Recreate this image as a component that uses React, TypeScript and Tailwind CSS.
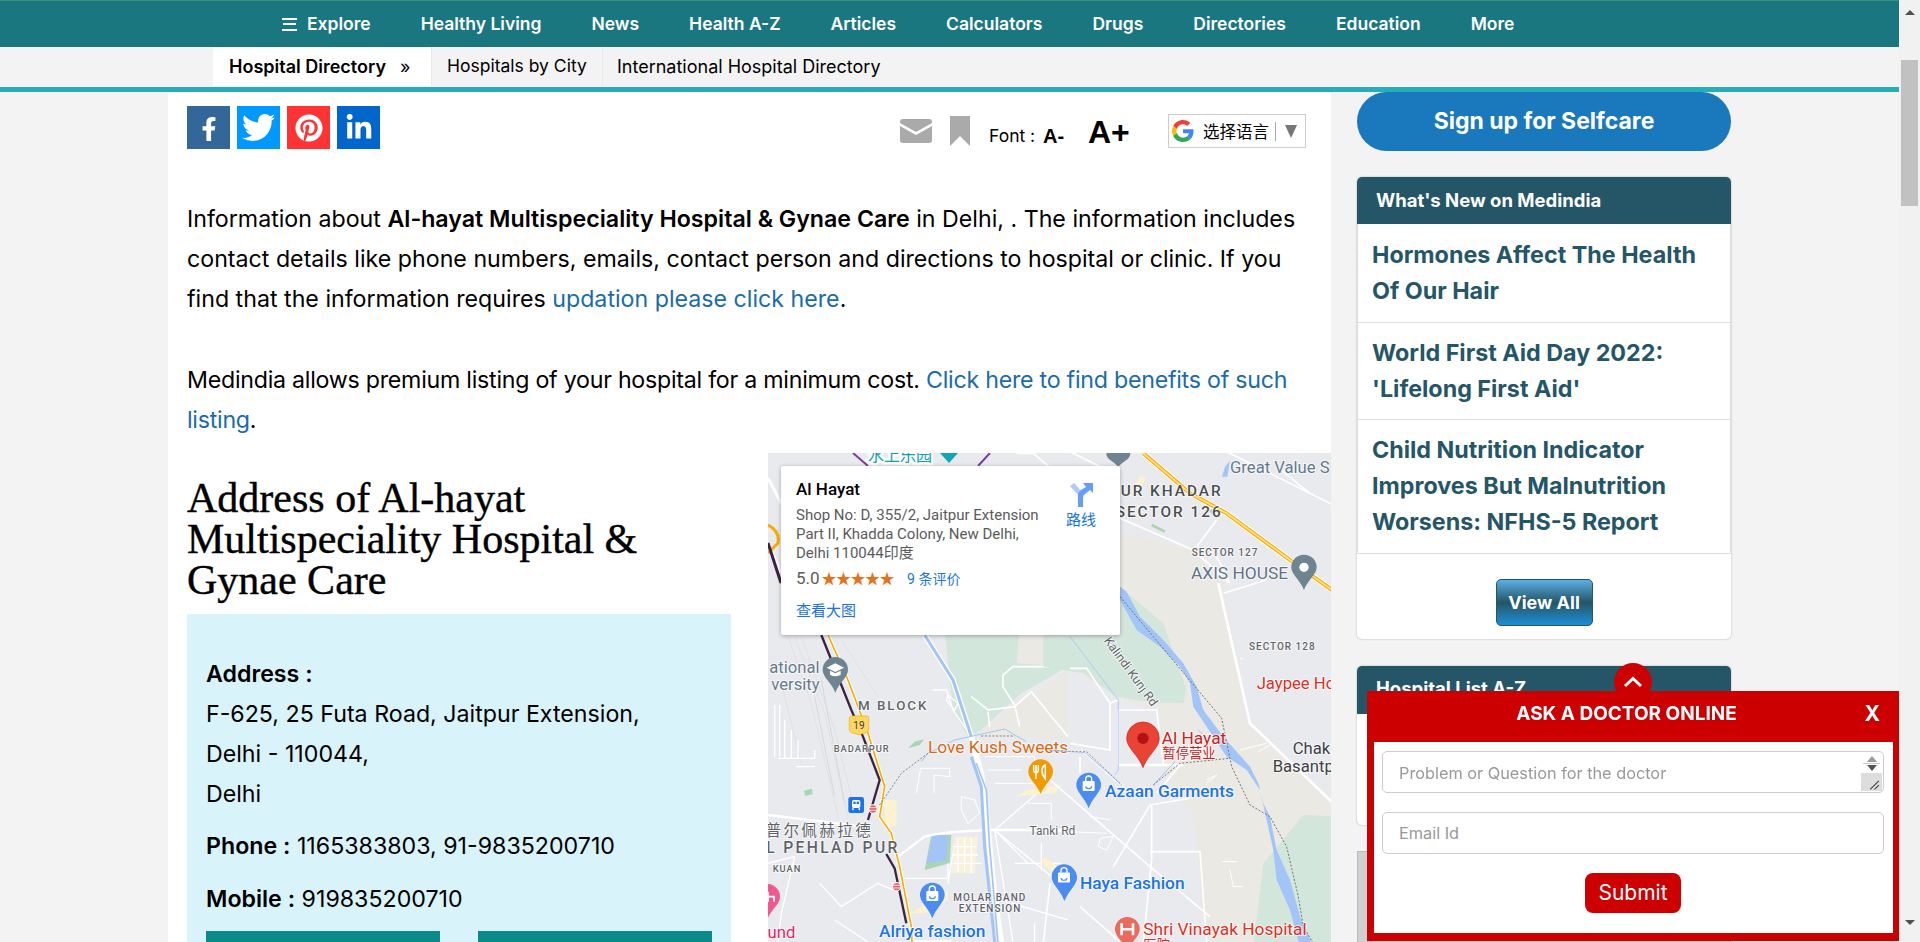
import { FaFacebookF, FaTwitter, FaPinterest, FaLinkedinIn } from "react-icons/fa";

const navLinks = ["Healthy Living", "News", "Health A-Z", "Articles", "Calculators", "Drugs", "Directories", "Education", "More"];

const sideNews = [
  { id: 1, lines: "Hormones Affect The Health Of Our Hair", cls: "pt-[13px] pb-[13px]" },
  { id: 2, lines: "World First Aid Day 2022: 'Lifelong First Aid'", cls: "pt-[12px] pb-[12px]" },
  { id: 3, lines: "Child Nutrition Indicator Improves But Malnutrition Worsens: NFHS-5 Report", cls: "pt-[12px] pb-[13px]" },
];

function pinPath(cx: number, cy: number, r: number, tip: number) {
  const k = tip - cy;
  return `M${cx} ${tip}C${cx - r * 0.3} ${cy + k * 0.55} ${cx - r} ${cy + r * 0.6} ${cx - r} ${cy}A${r} ${r} 0 1 1 ${cx + r} ${cy}C${cx + r} ${cy + r * 0.6} ${cx + r * 0.3} ${cy + k * 0.55} ${cx} ${tip}Z`;
}

function Pin({ cx, cy, r, tip, fill }: { cx: number; cy: number; r: number; tip: number; fill: string }) {
  return <path d={pinPath(cx, cy, r, tip)} fill={fill} />;
}

function BagPin({ cx, cy }: { cx: number; cy: number }) {
  return (
    <g>
      <Pin cx={cx} cy={cy} r={37} tip={cy + 70} fill="#4a8cf0" />
      <rect x={cx - 18} y={cy - 12} width={36} height={30} rx={3} fill="#fff" />
      <path d={`M${cx - 9} ${cy - 12}v-6a9 9 0 0 1 18 0v6`} fill="none" stroke="#fff" strokeWidth={4} />
      <path d={`M${cx - 9} ${cy + 4}a9 7 0 0 0 18 0`} fill="none" stroke="#4a8cf0" strokeWidth={3.5} />
    </g>
  );
}

function Label({ x, y, size, fill, children, weight = 400, spacing = 0, anchor = "start", rotate }: {
  x: number; y: number; size: number; fill: string; children: string; weight?: number; spacing?: number; anchor?: "start" | "end"; rotate?: number;
}) {
  return (
    <text
      x={x}
      y={y}
      fontSize={size}
      fontWeight={weight}
      fill={fill}
      letterSpacing={spacing}
      textAnchor={anchor}
      dominantBaseline="central"
      stroke="#ffffff"
      strokeWidth={5}
      strokeOpacity={0.85}
      paintOrder="stroke"
      transform={rotate ? `rotate(${rotate} ${x} ${y})` : undefined}
      className="font-['Roboto','Noto_Sans_CJK_SC',sans-serif]"
    >
      {children}
    </text>
  );
}

function MapPicture() {
  return (
    <svg width="563" height="520" className="block">
      <rect width="563" height="520" fill="#e8eaed" />

      {/* left half, traced at 3x */}
      <g transform="translate(0,177) scale(0.3333)">
        <path d="M530 0L900 0V110L760 190L640 300L600 320L555 240Z" fill="#d3e6dc" />
        <path d="M740 225L800 185L900 120V330L730 320L620 320Z" fill="#ebe9e3" />
        <path d="M470 720L490 615H550L545 700Z" fill="#a8d5b5" />
        <path d="M475 700L495 615H540L535 690Z" fill="#a3c4f7" />
        <path d="M420 355L440 335L468 328L455 345Z" fill="#a8d5b5" />
        <path d="M108 482L132 476L134 492L112 498Z" fill="#a8d5b5" />
        <g fill="none" stroke="#dfe1e5" strokeWidth={3}>
          <path d="M60 20L130 220L210 560M80 20L170 250L240 560M100 20L200 300L260 540M220 30L330 200M40 160L100 400" />
          <path d="M140 200L200 500M160 150L230 520" stroke="#d5d7db" />
        </g>
        <g fill="none" stroke="#ffffff" strokeWidth={4}>
          <path d="M20 225V380M35 225V380M50 270V385M70 300V385M90 330V385M30 385H140V360M85 410H140" />
          <path d="M0 555L290 590M390 680L470 620Q520 605 670 600H900" strokeWidth={7} />
          <path d="M0 700L80 680L40 850L30 936M155 760L220 830L330 760L420 800M200 870L300 936" />
          <path d="M445 490L458 415H545V440L498 435V490" strokeWidth={3} />
          <path d="M540 195L570 220L560 240L535 210ZM495 180H535L555 240L610 320" />
          <path d="M610 200L660 240L740 230L790 185L900 320M705 135L735 110H900M705 135V170L740 225L755 290M660 245L665 290" strokeWidth={5} />
          <path d="M680 600L820 480M680 600L900 780M680 600L780 700M680 600L735 936M410 745H540V700M540 760L560 640" />
          <path d="M580 500L620 510L635 550L600 580L580 540ZM650 380H800V440H840M660 420H760M680 460H800M780 520H850V570" strokeWidth={3} />
          <path d="M740 700H880M820 640V720M800 880V936M730 820L900 870" />
        </g>
        <path d="M780 480L880 465L860 490L740 500ZM830 680L880 720V750L820 700ZM450 835L540 780V810L470 850H430ZM350 510H385V590H350Z" fill="#fdf2cf" />
        <path d="M560 620H630L620 730H550Z" fill="#f8f1de" />
        <g fill="none" stroke="#ffffff" strokeWidth={4}>
          <path d="M570 625V725M590 625V725M610 625V730M555 650H625M555 675H630M555 700H640" />
        </g>
        <path d="M470 15L555 150L610 320L640 430L660 600L680 800L700 936" fill="none" stroke="#ffffff" strokeWidth={17} />
        <path d="M470 15L555 150L610 320" fill="none" stroke="#a3c4f7" strokeWidth={9} />
        <path d="M610 380L640 470L650 650L680 936" fill="none" stroke="#a3c4f7" strokeWidth={9} />
        <path d="M625 400L655 480L665 650L690 936" fill="none" stroke="#a3c4f7" strokeWidth={5} />
        <path d="M480 370L560 330L710 297L775 335M460 395L480 370" fill="none" stroke="#a3c4f7" strokeWidth={3} />
        <path d="M180 15L240 150L300 310L350 470L335 560L370 610L395 710L430 890L432 936H550" fill="none" stroke="#fff" strokeWidth={11} />
        <path d="M180 15L240 150L300 310L350 470L335 560L370 610L395 710L430 890L432 936" fill="none" stroke="#f9ab00" strokeWidth={5} />
        <path d="M160 15L250 240L285 320L335 450L300 570M355 672L380 715L415 880" fill="none" stroke="#3c2342" strokeWidth={7} />
        <path d="M335 525L400 430L480 370M640 318L740 318" fill="none" stroke="#80868b" strokeWidth={3} strokeDasharray="6 5" />
        <circle cx={315} cy={537} r={14} fill="#fff" />
        <circle cx={315} cy={537} r={11} fill="#ea5b6a" />
        <path d="M303 533H327M303 541H327" stroke="#fff" strokeWidth={2.5} />
        <circle cx={386} cy={770} r={14} fill="#fff" />
        <circle cx={386} cy={770} r={11} fill="#ea5b6a" />
        <path d="M375 766H397M375 774H397" stroke="#fff" strokeWidth={2.5} />
        <rect x={241} y={501} width={47} height={48} rx={7} fill="#1a73e8" />
        <rect x={252} y={510} width={25} height={24} rx={5} fill="#fff" />
        <rect x={256} y={515} width={7} height={7} fill="#1a73e8" />
        <rect x={266} y={515} width={7} height={7} fill="#1a73e8" />
        <path d="M255 534V541M274 534V541" stroke="#fff" strokeWidth={4} />
        <path d="M244 263Q246 258 252 258H296Q302 258 302 263V298Q302 306 295 308L273 314L251 308Q244 306 244 298Z" fill="#fdd663" stroke="#f9ab00" strokeWidth={2} />
        <text x={273} y={286} fontSize={30} textAnchor="middle" dominantBaseline="central" fill="#3c4043" className="font-['Roboto',sans-serif]">19</text>
        <Pin cx={202} cy={119} r={38} tip={188} fill="#6e8491" />
        <path d="M202 100L228 113L202 126L176 113Z" fill="#fff" />
        <path d="M186 122V134Q202 144 218 134V122L202 130Z" fill="#fff" />
        <Pin cx={818} cy={425} r={37} tip={492} fill="#f29900" />
        <path d="M804 405V428M797 405V420Q797 428 804 428Q811 428 811 420V405M804 428V447M832 405V447Q822 435 822 420Q822 410 832 405Z" fill="none" stroke="#fff" strokeWidth={4.5} />
        <BagPin cx={493} cy={795} />
        <BagPin cx={890} cy={743} />
        <Pin cx={-2} cy={800} r={38} tip={868} fill="#ee5a8f" />
        <path d="M0 785V815M0 800H18V815" fill="none" stroke="#fff" strokeWidth={5} />

        <Label x={155} y={112} size={50} fill="#64798a" anchor="end">ational</Label>
        <Label x={155} y={165} size={50} fill="#64798a" anchor="end">versity</Label>
        <Label x={270} y={228} size={40} fill="#5f6368" weight={500} spacing={6}>M BLOCK</Label>
        <Label x={197} y={357} size={28} fill="#5f6368" weight={500} spacing={3}>BADARPUR</Label>
        <Label x={480} y={350} size={52} fill="#d9670f">Love Kush Sweets</Label>
        <Label x={316} y={603} size={47} fill="#5f6368" spacing={7} anchor="end">普尔佩赫拉德</Label>
        <Label x={395} y={653} size={47} fill="#5f6368" weight={500} spacing={7} anchor="end">L PEHLAD PUR</Label>
        <Label x={14} y={715} size={28} fill="#5f6368" weight={500} spacing={3}>KUAN</Label>
        <Label x={556} y={804} size={30} fill="#5f6368" weight={500} spacing={3}>MOLAR BAND</Label>
        <Label x={572} y={837} size={30} fill="#5f6368" weight={500} spacing={3}>EXTENSION</Label>
        <Label x={333} y={903} size={52} fill="#1a73e8" weight={500}>Alriya fashion</Label>
        <Label x={82} y={908} size={50} fill="#e91e63" anchor="end">und</Label>
      </g>

      {/* right half, traced at 3x */}
      <g transform="translate(282,-3) scale(0.3333)">
        <path d="M-60 180L420 300L520 400L600 820L860 1070V1110L760 1095L640 1240L610 1490H470L430 1100L340 960L330 790L200 740L60 650L-100 640Z" fill="#ebe9e3" />
        <path d="M760 1095L860 1100V1490H610L640 1240Z" fill="#d3e6dc" />
        <path d="M210 410L340 520L410 720L400 760L320 760L200 740L100 670L-20 650L-20 555H210Z" fill="#d3e6dc" />
        <path d="M210 410L230 425L270 500L340 570L400 640L440 710L460 780L520 860L600 950L625 1000L640 1060L660 1100L680 1200L720 1290L750 1400L790 1490H750L720 1380L680 1290L670 1200L650 1110L630 1020L590 960L530 920L470 830L430 770L420 700L390 650L330 590L260 540L210 450Z" fill="#a3c4f7" />
        <path d="M525 50L540 32L532 80L516 80Z" fill="#a3c4f7" />
        <g fill="none" stroke="#ffffff" strokeWidth={5}>
          <path d="M50 0L170 60M100 60L210 210M210 205L430 300L540 400M520 0L860 170M680 50L780 130" />
          <path d="M505 400L600 820L860 1070" strokeWidth={8} />
          <path d="M520 430L650 390M540 400L500 320M440 290L500 210" />
          <path d="M205 945H400" strokeWidth={8} />
          <path d="M205 780V945M205 780H320L340 945M180 760L205 750M60 655L110 655L180 760L180 900L60 880" />
          <path d="M0 900L100 905L200 995L220 1005M90 920V970M300 1065L420 1045M300 1065L190 1250M305 1065V1230L280 1476" />
          <path d="M0 990L300 1250L480 1400M300 1205H450L470 1476M320 1030L390 945" />
          <path d="M0 1143L170 1150M150 1165L190 1160L170 1200L145 1190ZM120 1100L180 1110M515 1235H560M540 1260L550 1310H580M470 990L500 975L470 1000" strokeWidth={3} />
          <path d="M90 1370L210 1476M0 1300L-20 1476" />
          <path d="M570 900L650 880M625 905L660 885M570 625L580 628" strokeWidth={3} />
        </g>
        <path d="M60 560L205 750V960L195 975" fill="none" stroke="#a3c4f7" strokeWidth={2.5} />
        <path d="M0 900L105 908L215 1005M310 1005L375 935" fill="none" stroke="#a3c4f7" strokeWidth={3} />
        <path d="M445 840L480 875" fill="none" stroke="#a3c4f7" strokeWidth={3} />
        <path d="M-100 10L-50 10L20 70" fill="none" stroke="#fff" strokeWidth={5} />
        <path d="M280 10L420 130L530 190L720 330L860 430" fill="none" stroke="#fff" strokeWidth={18} />
        <path d="M280 10L420 130L530 190L720 330L860 430" fill="none" stroke="#f9ab00" strokeWidth={12} />
        <path d="M280 10L420 130L530 190L720 330L860 430" fill="none" stroke="#fde293" strokeWidth={5} />
        <path d="M270 80H290L260 130H240Z" fill="#fdf2cf" />
        <path d="M305 225L345 245M480 180L495 195" stroke="#a8d5b5" strokeWidth={8} />
        <path d="M210 440L410 680L515 805L545 950L600 1065L660 1100L710 1190L745 1340L760 1430L790 1480M310 1005L390 940L540 925" fill="none" stroke="#6f7478" strokeWidth={3} strokeDasharray="6 5" />
        <path d="M0 902L110 905L215 1005" fill="none" stroke="#80868b" strokeWidth={2.5} strokeDasharray="6 5" />

        <Pin cx={762} cy={352} r={38} tip={420} fill="#6e8491" />
        <circle cx={762} cy={352} r={14} fill="#fff" />
        <Pin cx={205} cy={10} r={36} tip={52} fill="#6e8491" />
        <Pin cx={279} cy={865} r={49} tip={953} fill="#ea4335" />
        <path d={pinPath(279, 865, 49, 953)} fill="none" stroke="#c5221f" strokeWidth={2} />
        <circle cx={279} cy={865} r={17} fill="#b31412" />
        <BagPin cx={116} cy={1005} />
        <BagPin cx={42} cy={1280} />
        <Pin cx={232} cy={1438} r={37} tip={1505} fill="#ea6a5e" />
        <path d="M215 1420V1456M249 1420V1456M215 1438H249" stroke="#fff" strokeWidth={8} fill="none" />

        <Label x={518} y={123} size={46} fill="#4a4d50" weight={500} spacing={6} anchor="end">JAITPUR KHADAR</Label>
        <Label x={518} y={187} size={46} fill="#4a4d50" weight={500} spacing={6} anchor="end">SECTOR 126</Label>
        <Label x={540} y={52} size={50} fill="#5d7a8c">Great Value Sharanam</Label>
        <Label x={425} y={308} size={30} fill="#5f6368" weight={500} spacing={3}>SECTOR 127</Label>
        <Label x={423} y={368} size={52} fill="#5d7285">AXIS HOUSE</Label>
        <Label x={597} y={591} size={30} fill="#5f6368" weight={500} spacing={3}>SECTOR 128</Label>
        <Label x={620} y={700} size={50} fill="#d93025">Jaypee Hospital</Label>
        <Label x={728} y={897} size={50} fill="#3c4043">Chak</Label>
        <Label x={668} y={950} size={50} fill="#3c4043">Basantpur</Label>
        <Label x={170} y={565} size={37} fill="#5f6368" rotate={54}>Kalindi Kunj Rd</Label>
        <Label x={335} y={865} size={52} fill="#c5221f">Al Hayat</Label>
        <Label x={337} y={910} size={40} fill="#c5221f">暂停营业</Label>
        <Label x={165} y={1024} size={52} fill="#1a73e8" weight={500}>Azaan Garments</Label>
        <Label x={76} y={1143} size={36} fill="#5f6368" anchor="end">Tanki Rd</Label>
        <Label x={90} y={1300} size={52} fill="#1a73e8" weight={500}>Haya Fashion</Label>
        <Label x={280} y={1438} size={52} fill="#d93025">Shri Vinayak Hospital</Label>
        <Label x={280} y={1486} size={40} fill="#d93025">医院</Label>
      </g>

      {/* strip above the info window */}
      <Label x={100} y={2} size={16} fill="#129eaf">水上乐园</Label>
      <path d="M172 0H190L181 10Z" fill="#12a5b5" />
      <path d="M85 0L100 13M210 13L222 0" fill="none" stroke="#7b3f98" strokeWidth={2} />
      <path d="M0 25L13 50M0 90L13 120" fill="none" stroke="#fff" strokeWidth={3} />
      <path d="M0 72Q12 78 10 90L0 100" fill="none" stroke="#f9ab00" strokeWidth={3} />
      <path d="M0 90L13 130" fill="none" stroke="#3c2342" strokeWidth={3} />
    </svg>
  );
}

function InfoWindow() {
  return (
    <div className="absolute left-[13px] top-[13px] w-[339px] h-[169px] bg-white rounded-[2px] shadow-[0_1px_4px_rgba(0,0,0,0.3)] pl-[15px] pt-[13px] font-['Roboto','Noto_Sans_CJK_SC',sans-serif] text-[#5b5b5b]">
      <div className="text-[17px] leading-[20px] font-medium text-black">Al Hayat</div>
      <div className="mt-[7px] w-[250px] text-[15px] leading-[19px]">
        Shop No: D, 355/2, Jaitpur Extension Part II, Khadda Colony, New Delhi, Delhi 110044印度
      </div>
      <div className="mt-[4px] flex items-center h-[24px]">
        <span className="text-[17px]">5.0</span>
        <span className="ml-[2px] text-[15px] tracking-[-0.5px] text-[#e7711b]">★★★★★</span>
        <span className="ml-[13px] text-[14px] text-[#1a73e8]">9 条评价</span>
      </div>
      <div className="mt-[10px] text-[15px] leading-[20px] text-[#1a73e8]">查看大图</div>
      <div className="absolute left-[283px] top-[16px] flex flex-col items-center w-[34px]">
        <svg width="24" height="25" viewBox="0 0 24 25">
          <path d="M1 4L5 1L14 11V25H9V13Z" fill="#aecbfa" />
          <path d="M9 25V14Q9 10 12 8L17 5L14 1H24V11L21 8L16 12Q14 13 14 16V25Z" fill="#669df6" />
        </svg>
        <span className="mt-[3px] text-[15px] leading-[20px] text-[#1a73e8]">路线</span>
      </div>
    </div>
  );
}

function GoogleG() {
  return (
    <svg width="22" height="22" viewBox="0 0 48 48">
      <path fill="#EA4335" d="M24 9.5c3.5 0 6.7 1.2 9.2 3.6l6.9-6.9C35.9 2.4 30.5 0 24 0 14.6 0 6.5 5.4 2.6 13.2l8 6.2C12.4 13.7 17.7 9.5 24 9.5z" />
      <path fill="#4285F4" d="M46.98 24.55c0-1.57-.15-3.09-.38-4.55H24v9.02h12.94c-.58 2.96-2.26 5.48-4.78 7.18l7.73 6c4.51-4.18 7.09-10.36 7.09-17.65z" />
      <path fill="#FBBC05" d="M10.53 28.59c-.48-1.45-.76-2.99-.76-4.59s.27-3.14.76-4.59l-7.98-6.19C.92 16.46 0 20.12 0 24c0 3.88.92 7.54 2.56 10.78l7.97-6.19z" />
      <path fill="#34A853" d="M24 48c6.48 0 11.93-2.13 15.89-5.81l-7.73-6c-2.15 1.45-4.92 2.3-8.16 2.3-6.26 0-11.57-4.22-13.47-9.91l-7.98 6.19C6.51 42.62 14.62 48 24 48z" />
    </svg>
  );
}

function Toolbar() {
  return (
    <div className="flex h-[107px] pl-[19px] pt-[14px]">
      <div className="flex gap-[7px] h-[43px] text-white">
        <div className="w-[43px] h-[43px] bg-[#336699] flex items-center justify-center text-[24px] pt-[2px]"><FaFacebookF /></div>
        <div className="w-[43px] h-[43px] bg-[#0099ff] flex items-center justify-center text-[33px]"><FaTwitter /></div>
        <div className="w-[43px] h-[43px] bg-[#ff3333] flex items-center justify-center text-[28px]"><FaPinterest /></div>
        <div className="w-[43px] h-[43px] bg-[#0066cc] flex items-center justify-center text-[28px]"><FaLinkedinIn /></div>
      </div>
      <div className="ml-[520px] flex h-[42px] items-start">
        <svg width="32" height="24" viewBox="0 0 32 24" className="mt-[13px] shrink-0">
          <path d="M3 0H29Q32 0 32 3V4L16 13L0 4V3Q0 0 3 0Z" fill="#aaaaaa" />
          <path d="M0 7L16 16L32 7V21Q32 24 29 24H3Q0 24 0 21Z" fill="#aaaaaa" />
        </svg>
        <svg width="20" height="30" viewBox="0 0 20 30" className="ml-[18px] mt-[10px] shrink-0">
          <path d="M0 0H20V30L10 20L0 30Z" fill="#aaaaaa" />
        </svg>
        <span className="ml-[19px] mt-[18px] w-[54px] text-[17.5px] leading-[24px] text-black">Font :</span>
        <span className="mt-[18px] w-[45px] text-[20px] leading-[24px] font-bold text-black font-['Liberation_Sans',sans-serif]">A-</span>
        <span className="mt-[8px] w-[80px] text-[32px] leading-[36px] font-bold text-black font-['Liberation_Sans',sans-serif]">A+</span>
        <div className="mt-[8px] w-[138px] h-[34px] bg-white border border-[#cccccc] flex items-center pl-[3px] font-['Noto_Sans_CJK_SC',sans-serif] text-[16.5px] text-black shrink-0">
          <GoogleG />
          <span className="ml-[9px] shrink-0">选择语言</span>
          <span className="ml-[6px] w-px h-[19px] bg-[#aaaaaa]"></span>
          <span className="ml-[9px] w-0 h-0 border-x-[6px] border-x-transparent border-t-[13px] border-t-[#777777]"></span>
        </div>
      </div>
    </div>
  );
}

function AddressBlock() {
  return (
    <div className="w-[544px] shrink-0">
      <h1 className="mt-[25px] w-[500px] text-[42px] leading-[41px] font-normal text-black font-['Liberation_Serif',serif] [-webkit-text-stroke:0.4px_black]">
        Address of Al-hayat Multispeciality Hospital &amp; Gynae Care
      </h1>
      <div className="mt-[13px] bg-[#d9f3fb] px-[19px] pt-[40px] text-[23.2px] leading-[40px] text-black h-[400px]">
        <b className="font-semibold">Address :</b>
        <div>F-625, 25 Futa Road, Jaitpur Extension,</div>
        <div>Delhi - 110044,</div>
        <div>Delhi</div>
        <div className="mt-[12px]"><b className="font-semibold">Phone :</b> 1165383803, 91-9835200710</div>
        <div className="mt-[13px]"><b className="font-semibold">Mobile :</b> 919835200710</div>
        <div className="mt-[12px] flex justify-between w-[506px]">
          <div className="w-[234px] h-[44px] bg-[#0b8a8a]"></div>
          <div className="w-[234px] h-[44px] bg-[#0b8a8a]"></div>
        </div>
      </div>
    </div>
  );
}

function Article() {
  return (
    <div className="w-[1163px] shrink-0 bg-white">
      <Toolbar />
      <div className="pl-[19px] pr-[20px] text-[23.2px] leading-[40px] text-black">
        <p>
          Information about <b className="font-semibold">Al-hayat Multispeciality Hospital &amp; Gynae Care</b> in Delhi, . The information includes contact details like phone numbers, emails, contact person and directions to hospital or clinic. If you find that the information requires <a className="text-[#1a6ca8]">updation please click here</a>.
        </p>
        <p className="mt-[41px] tracking-[-0.25px]">
          Medindia allows premium listing of your hospital for a minimum cost. <a className="text-[#1a6ca8]">Click here to find benefits of such listing</a>.
        </p>
      </div>
      <div className="mt-[13px] pl-[19px] flex">
        <AddressBlock />
        <div className="ml-[37px] relative w-[563px] h-[520px] overflow-hidden">
          <MapPicture />
          <InfoWindow />
        </div>
      </div>
    </div>
  );
}

function Sidebar() {
  return (
    <div className="ml-[26px] w-[374px] shrink-0">
      <div className="h-[59px] rounded-[30px] bg-[#1a78bd] flex items-center justify-center text-[23px] font-bold text-white">
        Sign up for Selfcare
      </div>
      <div className="mt-[26px] bg-white rounded-[5px] shadow-[0_0_2px_rgba(0,0,0,0.3)] overflow-hidden">
        <div className="h-[47px] bg-[#245667] flex items-center pl-[19px] text-[18.5px] font-bold text-white">What's New on Medindia</div>
        {sideNews.map((n) => (
          <div key={n.id} className={`border-x border-b border-[#dddddd] pl-[14px] pr-[20px] text-[23.3px] leading-[36px] font-bold text-[#245667] ${n.cls}`}>
            {n.lines}
          </div>
        ))}
        <div className="h-[85px] pt-[25px] flex justify-center">
          <div className="w-[97px] h-[47px] rounded-[5px] border border-[#245667] bg-gradient-to-b from-[#5cb0e6] via-[#245667] to-[#1a8fd8] flex items-center justify-center text-[18px] font-bold text-white">
            View All
          </div>
        </div>
      </div>
      <div className="mt-[27px] h-[159px] bg-white rounded-[5px] shadow-[0_0_2px_rgba(0,0,0,0.3)] overflow-hidden">
        <div className="h-[48px] bg-[#245667] flex items-center pl-[19px] pb-[3px] text-[18.5px] font-bold text-white">Hospital List A-Z</div>
      </div>
      <div className="mt-[26px] h-[300px] bg-[#d0d0d0] border border-[#bbbbbb]"></div>
    </div>
  );
}

function AskDoctor() {
  return (
    <div className="fixed right-[21px] bottom-px w-[532px] h-[250px] bg-[#cc0000] pl-[7px] pr-[6px] pb-[8px] flex flex-col">
      <div className="absolute left-[247px] -top-[28px] w-[38px] h-[38px] rounded-full bg-[#cc0000] flex justify-center pt-[13px]">
        <svg width="20" height="12" viewBox="0 0 20 12">
          <path d="M2 10L10 2.5L18 10" fill="none" stroke="#fff" strokeWidth="3" />
        </svg>
      </div>
      <div className="relative h-[51px] shrink-0 flex items-center justify-center pb-[5px] pr-[14px] text-[19px] font-bold text-white">
        ASK A DOCTOR ONLINE
        <span className="absolute right-[13px] top-[10px] text-[21px] leading-[26px]">X</span>
      </div>
      <div className="flex-1 bg-white pl-[8px] pr-[9px] pt-[9px] flex flex-col items-center">
        <div className="relative w-full h-[42px]">
          <textarea
            placeholder="Problem or Question for the doctor"
            className="block w-full h-[42px] resize-none overflow-hidden rounded-[5px] border border-[#cccccc] pl-[16px] pt-[9px] text-[16.3px] leading-[24px] placeholder:text-[#999999]"
          />
          <div className="absolute right-[2px] top-[1px] w-[21px] h-[39px] flex flex-col items-center">
            <span className="mt-[4px] w-0 h-0 border-x-[5px] border-x-transparent border-b-[6px] border-b-[#999999]"></span>
            <span className="mt-[1px] w-[17px] h-px bg-[#cccccc]"></span>
            <span className="mt-[1px] w-0 h-0 border-x-[5px] border-x-transparent border-t-[6px] border-t-[#555555]"></span>
            <svg width="21" height="21" viewBox="0 0 21 21" className="mt-[2px] bg-[#dddddd]">
              <path d="M9 19L19 9M14 19L19 14" stroke="#444" strokeWidth="1.3" />
            </svg>
          </div>
        </div>
        <input
          placeholder="Email Id"
          className="block mt-[19px] w-full h-[42px] rounded-[5px] border border-[#cccccc] pl-[16px] text-[16.3px] placeholder:text-[#999999]"
        />
        <button className="mt-[19px] w-[96px] h-[40px] rounded-[8px] bg-[#cc0000] text-[21px] text-white">Submit</button>
      </div>
    </div>
  );
}

export default function App() {
  return (
    <div className="flex w-[1920px] h-[942px] overflow-hidden bg-[#f3f3f3] font-['Inter',sans-serif]">
      <div className="w-[1899px] shrink-0">
        <div className="h-[47px] border-t border-[#3a9178] bg-[#1a767f] flex items-center pl-[282px] gap-[50px] text-[17.5px] font-semibold text-white">
          <div className="flex items-center gap-[10px]">
            <span className="flex flex-col gap-[3.5px] w-[15px]">
              <span className="h-[2px] bg-white"></span>
              <span className="h-[2px] bg-white w-[13px] ml-[1px]"></span>
              <span className="h-[2px] bg-white"></span>
            </span>
            Explore
          </div>
          {navLinks.map((item) => (
            <span key={item}>{item}</span>
          ))}
        </div>
        <div className="h-[40px] bg-[#f3f3f3] flex pl-[213px] text-[18px] text-black">
          <div className="w-[218px] h-[39px] bg-white flex items-center pl-[16px] font-semibold">
            Hospital Directory
            <span className="ml-[14px] font-normal">»</span>
          </div>
          <div className="w-[172px] h-[39px] border-l border-r border-[#eaeaea] flex items-center pl-[15px] text-[17.5px]">Hospitals by City</div>
          <div className="pl-[14px] h-[39px] flex items-center">International Hospital Directory</div>
        </div>
        <div className="h-[5px] bg-[#27adb9]"></div>
        <div className="flex pl-[168px]">
          <Article />
          <Sidebar />
        </div>
      </div>
      <div className="relative w-[21px] shrink-0 bg-[#f1f1f1]">
        <span className="absolute left-[6px] top-[10px] w-0 h-0 border-x-[5px] border-x-transparent border-b-[5px] border-b-[#505050]"></span>
        <div className="absolute left-[2px] top-[60px] w-[17px] h-[146px] bg-[#c1c1c1]"></div>
        <span className="absolute left-[6px] bottom-[17px] w-0 h-0 border-x-[5px] border-x-transparent border-t-[5px] border-t-[#505050]"></span>
      </div>
      <AskDoctor />
    </div>
  );
}
